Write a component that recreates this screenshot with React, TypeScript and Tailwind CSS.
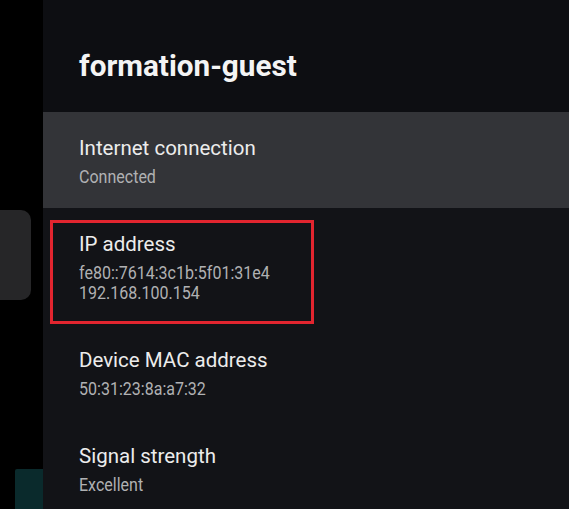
const rows = [
  { title: 'Internet connection', lines: ['Connected'], active: true },
  { title: 'IP address', lines: ['fe80::7614:3c1b:5f01:31e4', '192.168.100.154'], focused: true },
  { title: 'Device MAC address', lines: ['50:31:23:8a:a7:32'] },
  { title: 'Signal strength', lines: ['Excellent'] },
]

const App = () => {
  return (
    <div className="flex w-[569px] h-[509px] overflow-hidden bg-black font-['Roboto',sans-serif]">
      {/* left rail, partly hidden behind the panel */}
      <div className="flex flex-col w-[43px] shrink-0">
        <div className="mt-[210px] h-[90px] w-[31px] rounded-r-[10px] bg-[#262628]" />
        <div className="mt-auto ml-[15px] h-[40px] w-[28px] rounded-tl-[2px] bg-[#0a2a2c]" />
      </div>

      <div className="flex flex-col flex-1 bg-[#121317]">
        <div className="h-[112px] shrink-0 bg-[#0d0e12] pl-[36px] pt-[48px]">
          <h1 className="text-[29.7px] leading-[36px] font-bold text-[#f4f4f4]">formation-guest</h1>
        </div>

        {rows.map((row) => (
          <div
            key={row.title}
            className={`relative pl-[36px] pt-[22px] pb-[21px] ${row.active ? 'bg-[#333438]' : ''}`}
          >
            <div className="text-[20.5px] leading-[28px] text-[#ececec]">{row.title}</div>
            <div className="mt-[5px]">
              {row.lines.map((line) => (
                <div key={line} className="h-[20px] text-[18px] leading-[20px] text-[#b0b1b3] whitespace-nowrap">
                  <span className="inline-block origin-left scale-x-[0.89]">{line}</span>
                </div>
              ))}
            </div>
            {row.focused && (
              <div className="absolute left-[7px] top-[12px] w-[264px] h-[104px] border-[3px] border-[#e2252f]" />
            )}
          </div>
        ))}
      </div>
    </div>
  )
}

export default App
